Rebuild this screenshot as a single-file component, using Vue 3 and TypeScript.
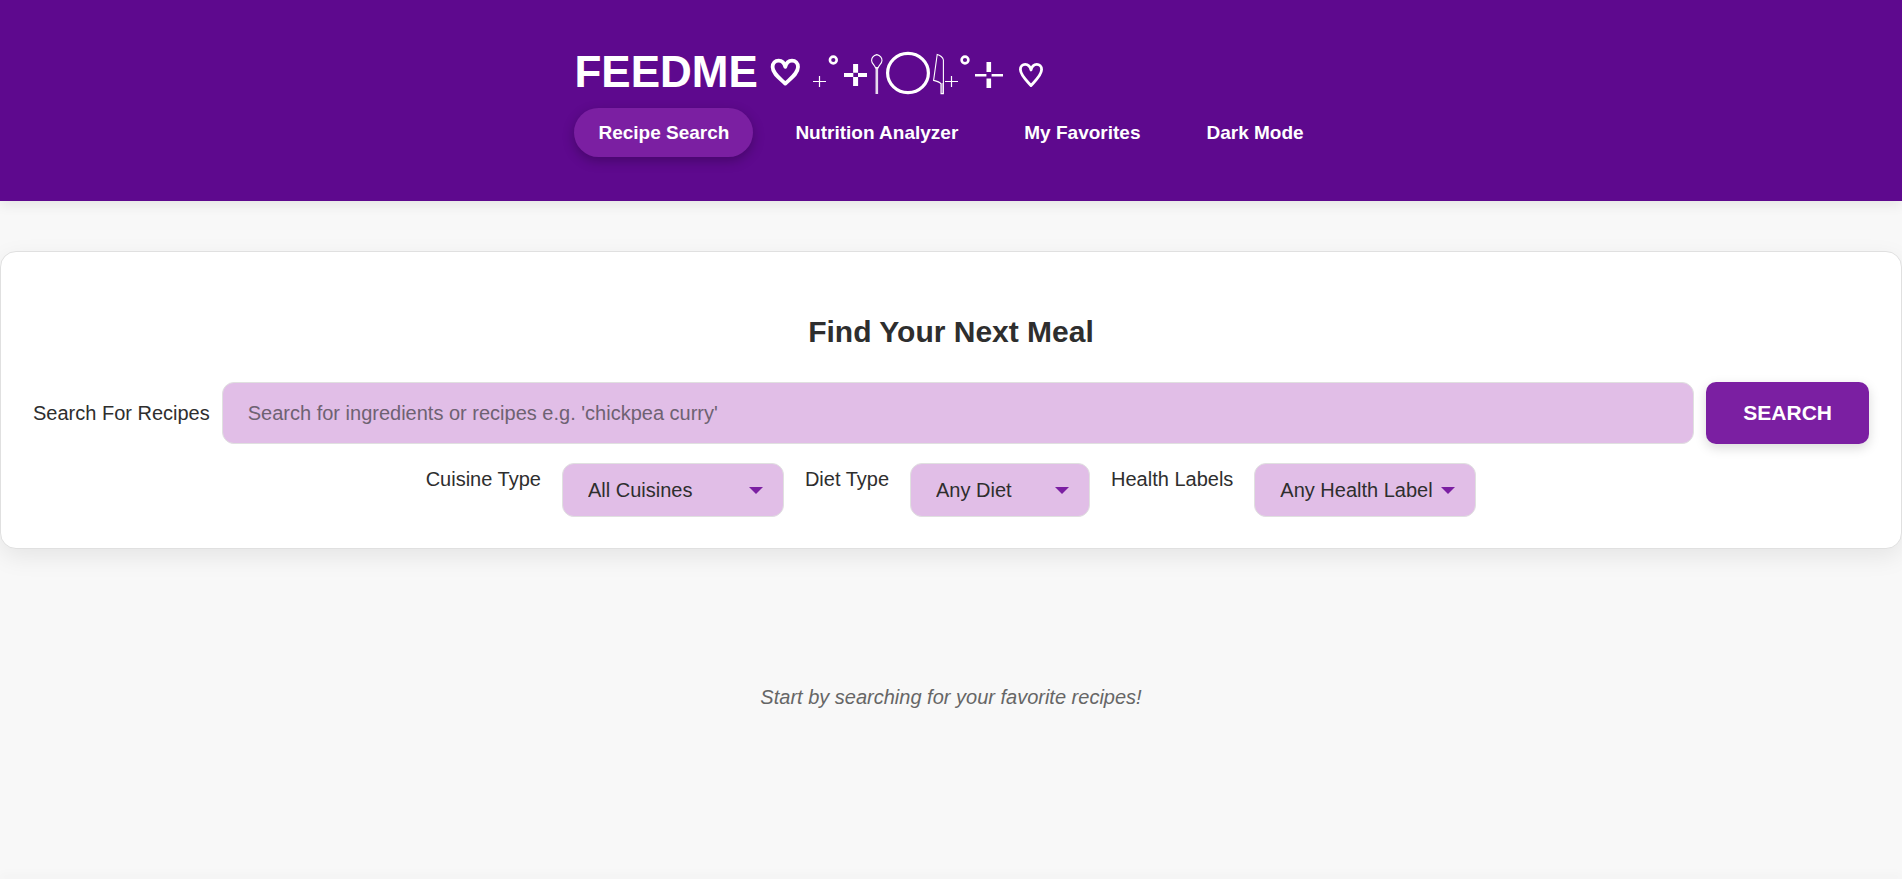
<script setup lang="ts">
import { ref } from 'vue'

interface Filter {
  id: string
  label: string
  value: string
  narrow?: boolean
}

const tabs: string[] = ['Recipe Search', 'Nutrition Analyzer', 'My Favorites', 'Dark Mode']
const activeTab = ref<string>('Recipe Search')
const query = ref<string>('')
const filters: Filter[] = [
  { id: 'cuisine', label: 'Cuisine Type', value: 'All Cuisines' },
  { id: 'diet', label: 'Diet Type', value: 'Any Diet', narrow: true },
  { id: 'health', label: 'Health Labels', value: 'Any Health Label' },
]
</script>

<template>
  <div class="page">
    <header class="header">
      <div class="header-inner">
        <h1 class="brand">
          <span>FEEDME</span>
          <svg class="ornament" width="276" height="48" viewBox="768 48 276 48" aria-hidden="true">
            <g fill="none" stroke="#fff">
              <path d="M785.3 83.6C780 78.5 772.6 73.5 772.6 67C772.6 63 775.2 60.6 778.6 60.6C782 60.6 784.4 63 785.3 66.8C786.2 63 788.6 60.6 792 60.6C795.4 60.6 798 63 798 67C798 73.5 790.6 78.5 785.3 83.6Z" stroke-width="3.8" stroke-linejoin="round" />
              <path d="M813 81.5H826M819.5 76V87M945 81.5H958M951.5 76V87" stroke-width="1.2" />
              <circle cx="833.3" cy="60" r="3.4" stroke-width="2.6" />
              <circle cx="965" cy="60" r="3.4" stroke-width="2.6" />
              <path d="M844 75H853.3M858 75H867" stroke-width="4" />
              <path d="M855.6 64V72.7M855.6 77V86" stroke-width="5" />
              <path d="M876.8 54.6C874 55.4 871.6 57.6 871.6 60.4C871.6 63.4 874.6 65 875.6 68H878C879 65 882 63.4 882 60.4C882 57.6 879.6 55.4 876.8 54.6Z" stroke-width="1.1" />
              <path d="M876.8 67V94" stroke-width="2.6" stroke-opacity="0.85" />
              <ellipse cx="908" cy="73" rx="20.4" ry="19.6" stroke-width="3.2" />
              <path d="M937.2 54.5L933.6 80.4C936.5 81 939.5 81.8 941 84V93.6H943.4V60C943 57.5 940 55 937.2 54.5Z" stroke-width="1.1" />
              <path d="M942.2 83V94" stroke-width="2" stroke-opacity="0.5" />
              <path d="M975 75.3H986.4M991.6 75.3H1003" stroke-width="2.6" />
              <path d="M988.8 62V72M988.8 78.5V88" stroke-width="4.6" />
              <path d="M1031 85.6C1026.5 80.5 1020.4 75 1020.4 69.5C1020.4 66.3 1022.6 64.4 1025.2 64.4C1028 64.4 1030.2 66.6 1031 70C1031.8 66.6 1034 64.4 1036.8 64.4C1039.4 64.4 1041.6 66.3 1041.6 69.5C1041.6 75 1035.5 80.5 1031 85.6Z" stroke-width="2.8" stroke-linejoin="round" />
            </g>
          </svg>
        </h1>
        <nav class="nav" aria-label="Main">
          <button
            v-for="tab in tabs"
            :key="tab"
            type="button"
            class="tab"
            :class="{ active: tab === activeTab }"
            @click="activeTab = tab"
          >{{ tab }}</button>
        </nav>
      </div>
    </header>

    <main class="main">
      <section class="card">
        <h2 class="title">Find Your Next Meal</h2>
        <form class="search" @submit.prevent>
          <label for="query">Search For Recipes</label>
          <input
            id="query"
            v-model="query"
            class="query"
            type="text"
            placeholder="Search for ingredients or recipes e.g. 'chickpea curry'"
          />
          <button type="submit" class="submit">SEARCH</button>
        </form>
        <div class="filters">
          <template v-for="filter in filters" :key="filter.id">
            <label :for="filter.id">{{ filter.label }}</label>
            <select :id="filter.id" class="select" :class="{ narrow: filter.narrow }">
              <option>{{ filter.value }}</option>
            </select>
          </template>
        </div>
      </section>
      <p class="empty">Start by searching for your favorite recipes!</p>
    </main>

    <footer class="footer"></footer>
  </div>
</template>

<style>
body {
  margin: 0;
  background: #f8f8f8;
}
</style>

<style scoped>
.page {
  display: flex;
  flex-direction: column;
  min-height: 100vh;
  overflow: hidden;
  color: #2e2e2e;
  font-family: "Liberation Sans", Arial, sans-serif;
  font-size: 20px;
  line-height: 32px;
}

button,
input,
select {
  box-sizing: border-box;
  margin: 0;
  font-family: inherit;
}

.header {
  display: flex;
  justify-content: center;
  padding: 36px 20px 44px;
  background: #5e098e;
  box-shadow: 0 4px 12px rgba(0, 0, 0, 0.08);
}

.brand {
  display: flex;
  align-items: center;
  gap: 10px;
  margin: 0;
  color: #fff;
  font-size: 44px;
  line-height: 72px;
}

.nav {
  display: flex;
  gap: 18px;
}

.tab {
  height: 49px;
  padding: 0 24px;
  border: 0;
  border-radius: 25px;
  background: transparent;
  color: #fff;
  font-size: 19px;
  font-weight: 700;
}

.tab.active {
  background: #7b1fa2;
  box-shadow: 0 4px 12px rgba(0, 0, 0, 0.25);
}

.main {
  flex: 1;
}

.card {
  margin-top: 50px;
  padding: 56px 32px 31px;
  border: 1px solid #e0e0e0;
  border-radius: 16px;
  background: #fff;
  box-shadow: 0 8px 24px rgba(0, 0, 0, 0.08);
}

.title {
  margin: 0 0 26px;
  font-size: 30px;
  line-height: 48px;
  text-align: center;
}

.search {
  display: flex;
  align-items: center;
  gap: 12px;
}

.query {
  flex: 1;
  min-width: 0;
  height: 62px;
  padding: 0 25px;
  border: 1px solid #e0e0e0;
  border-radius: 12px;
  background: #e1bee7;
  color: #2e2e2e;
  font-size: 20px;
}

.query::placeholder {
  color: #6e6272;
}

.submit {
  height: 62px;
  padding: 0 37px;
  border: 0;
  border-radius: 10px;
  background: #7b1fa2;
  box-shadow: 0 4px 12px rgba(0, 0, 0, 0.15);
  color: #fff;
  font-size: 21px;
  font-weight: 700;
}

.filters {
  display: flex;
  flex-wrap: wrap;
  justify-content: center;
  gap: 21px;
  margin-top: 19px;
}

.select {
  width: 222px;
  height: 54px;
  padding: 0 40px 0 25px;
  border: 1px solid #e0e0e0;
  border-radius: 12px;
  appearance: none;
  background: #e1bee7 url("data:image/svg+xml,%3Csvg xmlns='http://www.w3.org/2000/svg' width='14' height='7'%3E%3Cpath d='M0 0H14L7 7Z' fill='%237b1fa2'/%3E%3C/svg%3E") no-repeat right 20px center;
  color: #2e2e2e;
  font-size: 20px;
}

.select.narrow {
  width: 180px;
}

.empty {
  margin: 132px 20px;
  color: #666;
  font-style: italic;
  text-align: center;
}

.footer {
  box-shadow: 0 -2px 10px 1px rgba(0, 0, 0, 0.08);
}
</style>
